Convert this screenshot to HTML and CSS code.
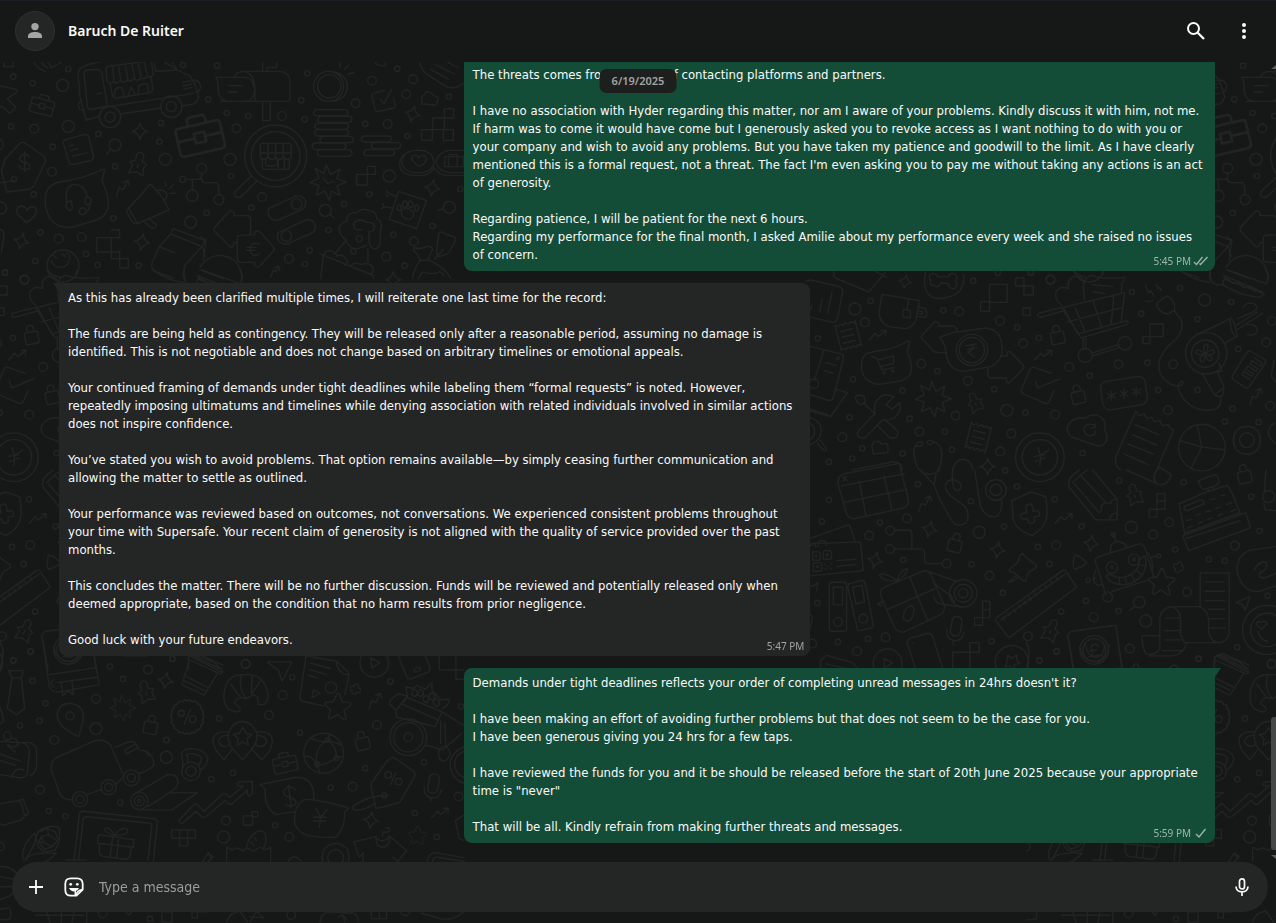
FILE: index.html
```html
<!DOCTYPE html>
<html lang="en">
<head>
<meta charset="utf-8">
<meta name="viewport" content="width=device-width, initial-scale=1">
<title>Baruch De Ruiter</title>
<link rel="stylesheet" href="styles.css">
</head>
<body>
<svg class="wallpaper" width="100%" height="100%" aria-hidden="true">
<defs>
<path id="spark" d="M0-25Q4-4 23 0Q4 4 0 25Q-4 4-23 0Q-4-4 0-25Z"/>
<path id="burst" d="M-5-52L8-22L35-38L27-10L55 0L27 12L36 40L10 27L5 55L-10 27L-35 40L-27 10L-54 2L-27-12L-38-40L-12-25Z"/>
<path id="lock" d="M-20-10Q-20-14-15-14L15-14Q20-14 20-10V17Q20 22 15 22H-15Q-20 22-20 17ZM-10-14V-26Q-9-34 0-34Q9-34 10-26V-14"/>
<path id="arrow" d="M-27 14L-9-6L0 4L22-14M8-15L24-15L22 0"/>
<path id="pin" d="M-10-30Q0-46 12-30L10-12L26-5L18 6L22 30L0 22L-22 30L-16 4L-26-4L-10-12ZM0-2V8"/>
<path id="star" d="M0-40Q4-42 8-34L15-14L38-12Q44-8 38-2L20 12L26 34Q26 42 18 38L0 24L-20 36Q-28 38-26 30L-20 10L-36-4Q-40-12-32-13L-13-14Z"/>
<path id="mic" d="M-15-18Q-15-34 0-34Q15-34 15-18V8Q15 24 0 24Q-15 24-15 8ZM-26 10Q-24 38 0 38Q24 38 26 10M0 38V50"/>
<path id="cross" d="M-6-14Q0-18 6-14L7-7L14-6Q18 0 14 6L7 7L6 14Q0 18-6 14L-7 7L-14 6Q-18 0-14-6L-7-7Z"/>
<path id="case" d="M-30-18H30Q35-18 35-13V20Q35 26 29 26H-29Q-35 26-35 20V-13Q-35-18-30-18ZM-14-18V-26Q-14-31-8-31H8Q14-31 14-26V-18M-35 2H-8M8 2H35M-8-5H8V10H-8Z"/>
<path id="gear" d="M0-40Q6-46 12-38Q22-42 25-32Q36-31 34-21Q43-15 38-7Q45 0 38 7Q43 16 34 21Q35 31 25 32Q21 42 12 38Q6 46 0 40Q-7 46-12 38Q-22 42-25 32Q-36 31-34 21Q-43 15-38 7Q-45 0-38-7Q-43-16-34-21Q-35-31-25-32Q-21-42-12-38Q-6-46 0-40Z"/>
<path id="receipt" d="M-30-40L-22-34L-14-40L-6-34L2-40L10-34L18-40L26-34L32-40V38L24 32L16 38L8 32L0 38L-8 32L-16 38L-24 32L-30 38ZM-18-18H18M-18 0H18M-18 18H18"/>
<pattern id="doodles" width="1026" height="923" patternUnits="userSpaceOnUse">
<g id="tile">
<!-- top left: truck, briefcases, price tag, headset, megaphone -->
<g class="ink">
<circle class="s" cx="205" cy="207"/><circle class="s" cx="98" cy="250"/><circle class="s" cx="40" cy="230"/><circle class="s" cx="33" cy="379"/><circle class="s" cx="158" cy="440"/><circle class="s" cx="295" cy="402"/><circle class="s" cx="483" cy="369"/><circle class="s" cx="478" cy="425"/><circle class="s" cx="345" cy="499"/><circle class="s" cx="101" cy="583"/><circle class="s" cx="340" cy="655"/><circle class="s" cx="121" cy="697"/><circle class="s" cx="106" cy="783"/><circle class="s" cx="258" cy="762"/><circle class="s" cx="293" cy="795"/><circle class="s" cx="416" cy="797"/><circle class="s" cx="15" cy="818"/><circle class="s" cx="549" cy="195"/>
<circle class="l" cx="188" cy="256"/><circle class="m" cx="103" cy="386"/><circle class="l" cx="205" cy="379"/><circle class="m" cx="156" cy="515"/><circle class="l" cx="-8" cy="434"/><circle class="l" cx="496" cy="478"/><circle class="m" cx="176" cy="716"/><circle class="m" cx="245" cy="711"/><circle class="l" cx="572" cy="666"/><circle class="l" cx="2" cy="624"/><circle class="m" cx="73" cy="838"/>
<circle class="l" cx="345" cy="435"/><path d="M332 448L320 462"/>
<path d="M12 180V200H40V180M98 180Q112 208 136 214M118 180Q130 196 142 204M142 180L154 204L184 186"/>
<path d="M-10 255L48 268Q54 271 51 276L22 296L46 320Q48 324 44 327L32 338Q28 340 25 336L5 318L-8 330"/>
<path d="M298 350L258 360Q250 330 240 290L234 220Q236 206 250 200L270 192Q400 160 460 184L468 214L532 210L570 228Q586 250 596 290Q592 308 580 312L546 318M362 342L482 324M490 184L532 210L515 184M252 218Q256 210 264 210L292 208Q304 210 306 222L322 318L272 328Q264 328 262 320ZM292 282L306 278M246 304Q232 306 236 322Q242 334 254 330M272 328L582 280M580 240Q600 240 602 260Q600 276 588 276M548 248L572 242M550 258L574 252M552 268L576 262"/>
<path d="M318 206L320 240Q326 254 340 246Q350 254 360 242Q372 252 382 240Q392 248 402 236Q414 246 422 234Q434 240 442 230Q456 234 460 222L454 186M318 206Q320 198 330 198L440 184M338 200L342 244M356 198L362 240M376 196L384 238M396 192L404 236M414 190L424 232M434 188L442 228M330 252L338 288Q342 296 352 294L448 278Q456 276 458 268L454 232M342 292L346 268Q356 260 366 264L372 286M384 284L394 262L406 282M414 278L418 256Q430 248 442 252L446 276"/>
<circle cx="330" cy="351" r="32"/><circle cx="330" cy="351" r="15"/><circle cx="514" cy="320" r="32"/><circle cx="514" cy="320" r="15"/>
<use href="#case" transform="translate(127 316) rotate(14)"/><use href="#case" transform="translate(599 408) rotate(-13) scale(1.95)"/>
<use href="#spark" x="420" y="394"/><use href="#spark" transform="translate(64 724) rotate(14)"/><use href="#spark" transform="translate(426 726) rotate(8)"/>
<use href="#pin" transform="translate(414 494) rotate(12)"/><use href="#arrow" transform="translate(368 565) rotate(-24)"/>
<path d="M200 418L252 404Q264 402 267 412L280 468Q282 478 272 482L220 493Q210 495 207 485L190 430Q190 420 200 418ZM208 438L220 435M212 452L234 446M218 469L262 458"/>
<path d="M60 430L20 472Q12 480 10 496L4 510L20 576L86 568Q96 566 104 552L136 486Q138 476 130 468L76 430Q66 424 60 430ZM-10 550L42 542"/><circle class="s" cx="42" cy="538"/>
<path d="M88 470Q82 462 72 464Q58 468 59 478Q62 486 76 488Q90 492 90 500Q86 510 72 508Q60 506 57 496M74 454V514"/>
<path d="M314 510L306 544Q330 590 324 625Q314 654 284 662L214 682Q174 686 150 656Q130 616 138 580Q148 552 178 546Q250 536 304 510Q314 506 314 510ZM200 608Q192 566 218 554Q250 548 262 590M201 608Q190 624 212 632Q222 624 212 602ZM256 592Q272 588 274 606Q264 618 256 612ZM270 614Q268 632 258 634"/><circle cx="248" cy="634" r="10"/>
<path d="M80 668L52 642Q46 622 62 618Q76 618 80 632Q90 616 106 622Q116 638 96 656Z"/>
<path d="M450 552Q476 570 508 630L410 672Q402 672 396 664L380 636Q380 628 386 624Q420 590 450 552ZM386 624L412 670M430 662L454 684Q466 688 470 676L446 654M472 572Q490 566 500 580Q502 594 492 602M494 546L498 558M508 566L520 554M512 580H528"/>
<circle cx="605" cy="505" r="15"/><circle cx="548" cy="538" r="9"/><circle cx="577" cy="587" r="17"/><circle cx="657" cy="599" r="15"/><path d="M557 538H598Q606 536 605 520M605 536Q606 548 616 548H650Q657 550 657 584M577 538V570"/>
<path d="M334 690H359V713H334V756H290V713H334M334 756V776H359V804H385V776H359V756H334"/>
<circle cx="189" cy="798" r="48"/><path d="M154 782Q160 802 182 802Q208 800 210 770Q206 754 196 764M160 766L170 774M186 762L196 770M-6 690Q12 684 12 710L4 756"/>
<path d="M520 686L616 722L606 740L512 702ZM512 702L478 740L524 758M478 740L456 790Q452 806 464 814L520 834M606 740L556 794Q548 812 556 840M606 740L616 770"/>
</g>
<!-- mailbox, magnifier, coins, tags, poodle -->
<g class="ink" transform="translate(600 180)">
<circle class="s" cx="51" cy="17"/><circle class="s" cx="25" cy="118"/><circle class="s" cx="80" cy="159"/><circle class="s" cx="145" cy="168"/><circle class="s" cx="304" cy="121"/><circle class="s" cx="314" cy="178"/><circle class="s" cx="322" cy="40"/><circle class="s" cx="592" cy="26"/><circle class="s" cx="747" cy="110"/><circle class="s" cx="496" cy="191"/><circle class="s" cx="622" cy="228"/><circle class="s" cx="93" cy="348"/><circle class="s" cx="20" cy="459"/><circle class="s" cx="154" cy="443"/><circle class="s" cx="432" cy="432"/><circle class="s" cx="508" cy="403"/><circle class="s" cx="386" cy="510"/><circle class="s" cx="580" cy="524"/><circle class="s" cx="698" cy="498"/><circle class="s" cx="781" cy="387"/><circle class="s" cx="329" cy="571"/><circle class="s" cx="315" cy="612"/><circle class="s" cx="460" cy="574"/><circle class="s" cx="614" cy="617"/>
<circle class="m" cx="246" cy="168"/><circle class="m" cx="109" cy="205"/><circle class="l" cx="90" cy="298"/><circle class="m" cx="467" cy="130"/><circle class="m" cx="516" cy="62"/><circle class="m" cx="640" cy="58"/><circle class="m" cx="619" cy="103"/><circle class="m" cx="563" cy="192"/><circle class="l" cx="568" cy="348"/><circle class="m" cx="186" cy="411"/><circle class="m" cx="267" cy="596"/><circle class="m" cx="559" cy="590"/><circle class="m" cx="642" cy="544"/>
<path d="M48 52H140Q162 58 164 90Q162 122 136 124H80Q54 118 54 84Q56 70 48 52ZM62 124H260Q270 124 270 114V60Q266 36 240 34H134Q110 34 104 50M134 34Q164 42 165 90V124M84 77H128M84 96H110M188 34V0M230 0V22H202V34M188 124V182H211V124"/>
<circle cx="386" cy="79" r="45"/><circle cx="388" cy="79" r="35"/><path d="M398 36Q444 44 442 84Q438 118 400 124M418 5L422 22M434 28L446 16M444 42L462 38"/>
<circle cx="227" cy="288" r="93"/><circle cx="227" cy="288" r="73"/><path d="M154 348L108 392Q98 402 108 410Q118 416 126 408L172 362M188 250H268Q274 252 274 258V290Q272 298 262 298Q252 298 250 290Q248 298 238 298Q228 298 226 290Q226 298 216 298Q206 298 204 290Q200 298 192 298Q182 298 181 290V258Q182 250 188 250ZM181 279H274M204 250V290M227 250V290M250 250V290M187 298V322Q188 328 194 328H262Q268 328 268 320V298M197 298V310Q198 318 204 318H226Q232 316 232 308V296M235 328V298M253 328V298"/>
<path d="M350 149H434Q444 149 444 158T434 167H350Q340 167 341 158T350 149ZM362 169H448Q456 171 456 178T448 188H362Q354 186 354 179T362 169ZM354 190H436Q446 192 446 199T436 208H354Q344 206 344 199T354 190ZM354 209H436Q446 211 446 219T436 228H354Q344 227 344 218T354 209ZM368 229H450Q460 230 460 239T450 248H368Q360 246 360 239T368 229ZM346 249H430Q438 251 438 259T430 268H346Q336 267 337 258T346 249ZM362 269H446Q456 271 456 279T446 289H362Q352 288 352 279T362 269Z"/>
<path d="M492 228H566Q574 230 574 237T566 246H492Q484 244 484 237T492 228ZM522 248H594Q602 250 602 257T594 266H522Q514 264 514 257T522 248ZM500 269H576Q584 270 584 278T576 287H500Q492 286 492 278T500 269Z"/>
<path d="M552 91L520 100Q514 103 516 110L526 150Q528 156 536 154L580 144Q588 142 586 134L580 112M540 117L552 130L576 88M520 0Q530 20 556 18V5"/>
<path d="M664 134L667 110Q668 106 674 104L680 95L696 100L698 106L710 110Q715 112 714 118L710 132Q708 136 702 135L670 132ZM660 5Q660 24 682 44L740 80Q764 90 790 70M692 28L746 58M702 12L764 42M740 5L776 24"/>
<use href="#spark" transform="translate(638 162) rotate(14)"/><use href="#spark" transform="translate(697 384) rotate(10)"/><use href="#spark" x="580" y="660"/><use href="#burst" x="384" y="366"/><path d="M370 354L382 370L402 364M528 364"/>
<path d="M733 146H761V174H733ZM698 174H733V209H698ZM665 209H697V241H665ZM730 209H760V241H730ZM502 319H526V343H502ZM470 343H502V375H470Z"/>
<path d="M642 271H664Q700 276 702 308Q698 336 664 338H640Q608 332 606 306Q608 276 642 271ZM610 284Q590 310 606 334Q620 346 640 346H668Q690 346 700 326M656 320L636 300Q632 286 646 286Q654 286 656 294Q664 282 676 288Q684 302 668 314ZM800 271H750Q712 276 708 308Q714 334 750 338H800M702 322Q716 346 740 346H800M734 290H790V320H734ZM746 284H772V320M746 290V320"/>
<path d="M206 446L288 408Q310 406 317 424Q318 444 304 450L236 480Q212 484 204 462ZM234 518L318 480Q342 476 346 500Q346 516 330 522L262 552Q238 554 232 532Z"/><circle cx="290" cy="432" r="16"/><circle cx="259" cy="528" r="16"/>
<circle cx="376" cy="451" r="18"/><path d="M389 464L404 474"/><circle cx="748" cy="442" r="18"/><path d="M730 446L712 452M596 394L680 422L650 506L568 478ZM559 392L566 400L590 410M558 404L564 410M548 430L552 440L574 444M544 446L552 442M604 460Q608 478 626 478Q646 474 640 456Q624 438 606 450Z"/>
<ellipse cx="598" cy="443" rx="6" ry="9"/><ellipse cx="615" cy="433" rx="7" ry="10"/><ellipse cx="632" cy="433" rx="7" ry="10"/><ellipse cx="650" cy="444" rx="6" ry="9"/>
<path d="M152 525V476Q150 468 142 467H102V458Q98 450 88 454L44 502Q40 508 44 514L90 560Q98 564 101 554V548H112M164 524V516Q172 510 180 516L220 560Q226 568 220 574L178 620Q168 624 164 616V607H120Q112 606 112 598V534Q112 526 120 526ZM178 552Q160 544 152 560Q148 580 160 586Q170 588 178 582M140 562H168M140 571H166"/>
<path d="M439 540Q414 524 418 504Q422 486 440 484Q440 456 470 458Q486 442 508 452Q530 454 530 476Q546 480 544 502L540 516Q546 556 530 566Q512 570 508 548L506 516Q524 514 524 500Q520 484 502 488Q486 476 472 482Q456 488 462 500Q466 512 486 508M439 540L404 582M504 566L504 605M440 546Q450 566 474 566L500 556"/><circle cx="478" cy="536" r="9"/>
<path d="M360 582L520 646V655M370 588L362 656M372 586Q372 572 392 572Q410 576 410 588Q430 580 440 600Q448 612 434 616M454 616Q466 604 482 614Q500 606 514 616Q528 632 510 644M212 652L220 630L228 636L234 620M222 624L236 618L240 632"/>
<path d="M0 530L18 540L10 600M0 622Q20 588 60 586Q120 590 128 656M0 630L70 656M722 516L764 532Q768 536 766 542L746 580L718 590Q710 588 710 580L716 520ZM730 568L704 598M642 562Q660 570 680 560Q698 556 698 570Q684 590 686 600L660 602Q660 588 642 574ZM660 602Q640 630 638 656M686 600Q740 626 752 656M656 656Q664 628 680 640H710Q724 628 732 650"/>
</g>
<!-- right, upper: cart, speech bubbles, hair dryer, tools -->
<g class="ink" transform="translate(2418 810)">
<circle class="s" cx="194" cy="93"/><circle class="s" cx="36" cy="205"/><circle class="s" cx="412" cy="121"/><circle class="s" cx="502" cy="32"/><circle class="s" cx="576" cy="8"/><circle class="s" cx="675" cy="8"/><circle class="s" cx="634" cy="172"/><circle class="s" cx="699" cy="204"/><circle class="s" cx="394" cy="303"/><circle class="s" cx="141" cy="328"/><circle class="s" cx="290" cy="362"/><circle class="s" cx="565" cy="358"/><circle class="s" cx="131" cy="442"/><circle class="s" cx="311" cy="446"/><circle class="s" cx="417" cy="485"/><circle class="s" cx="659" cy="428"/><circle class="s" cx="169" cy="535"/><circle class="s" cx="290" cy="551"/><circle class="s" cx="139" cy="566"/><circle class="s" cx="69" cy="576"/><circle class="s" cx="438" cy="540"/><circle class="s" cx="830" cy="550"/><circle class="s" cx="852" cy="317"/><circle class="s" cx="978" cy="66"/><circle class="s" cx="1006" cy="131"/><circle class="s" cx="1122" cy="54"/><circle class="s" cx="1175" cy="147"/><circle class="s" cx="1276" cy="96"/><circle class="s" cx="1025" cy="278"/><circle class="s" cx="1057" cy="360"/><circle class="s" cx="1175" cy="360"/><circle class="s" cx="1297" cy="237"/><circle class="s" cx="1280" cy="416"/><circle class="s" cx="1257" cy="455"/><circle class="s" cx="1358" cy="457"/><circle class="s" cx="598" cy="602"/>
<circle class="l" cx="147" cy="117"/><circle class="m" cx="177" cy="157"/><circle class="m" cx="460" cy="124"/><circle class="m" cx="734" cy="30"/><circle class="m" cx="582" cy="152"/><circle class="m" cx="652" cy="220"/><circle class="m" cx="346" cy="281"/><circle class="m" cx="486" cy="332"/><circle class="m" cx="790" cy="291"/><circle class="l" cx="603" cy="421"/><circle class="m" cx="449" cy="437"/><circle class="m" cx="748" cy="434"/><circle class="m" cx="341" cy="485"/><circle class="m" cx="616" cy="491"/><circle class="m" cx="109" cy="502"/><circle class="m" cx="583" cy="545"/><circle class="m" cx="938" cy="283"/><circle class="m" cx="1102" cy="283"/><circle class="l" cx="1196" cy="90"/><circle class="m" cx="1398" cy="153"/><circle class="m" cx="1381" cy="217"/><circle class="m" cx="1086" cy="421"/><circle class="m" cx="1393" cy="408"/>
<use href="#spark" transform="translate(298 35) rotate(12) scale(.85)"/><use href="#spark" x="545" y="590"/><use href="#burst" x="382" y="386"/><use href="#lock" transform="translate(755 200) rotate(-12)"/><use href="#lock" transform="translate(817 379) rotate(-12)"/><use href="#arrow" x="217" y="196"/><use href="#arrow" x="714" y="256"/><use href="#arrow" transform="translate(1350 380) rotate(-28)"/><use href="#pin" transform="translate(508 400) rotate(-24) scale(.85)"/>
<use href="#receipt" transform="translate(126 198) rotate(-14)"/><use href="#receipt" transform="translate(516 503) rotate(14)"/><use href="#gear" x="1323" y="511"/><circle cx="1323" cy="511" r="22"/>
<path d="M0 34L14 30L100 50Q112 54 110 68L94 148Q90 158 80 157L6 140M48 86L42 124M78 68L65 130M18 106L14 120M83 0L84 22L188 66L238 8M200 0L242 22"/>
<path d="M228 73L340 92L330 150Q318 176 296 176L250 170Q224 162 219 132ZM308 88L304 118M292 118L314 122L312 144L290 140ZM338 110L358 116Q366 128 360 142L334 140M336 122L350 126L348 132L334 130"/>
<path d="M360 0Q346 60 376 80Q396 92 440 78Q478 60 473 14M384 46Q368 44 374 32Q364 14 380 10Q396 14 394 20H428Q432 6 446 12Q458 20 450 32Q458 50 444 56Q430 58 428 42L404 38Q400 58 384 46Z"/>
<path d="M551 43H604V97H551ZM524 95H551V124H524ZM629 24H654V48H629ZM654 48H682V75H654ZM651 114H673V136H651ZM1032 162H1072V200H1032ZM1011 200H1032V221H1011Z"/>
<path d="M770 108Q744 90 750 66Q764 46 788 56Q782 30 802 20Q828 14 836 40M804 0Q810 14 840 22M888 14L892 0M836 92L832 50Q832 26 856 16Q900 30 956 22Q960 26 948 40L946 70M860 44L920 50M862 66L896 70"/>
<path d="M698 130L766 112M704 142L776 122M698 130Q690 142 704 142M766 112L826 204L962 164Q972 158 962 152L816 192L772 112L956 68L946 154M784 156L946 114M808 114L838 186M862 94L888 174M924 76L916 162M832 204V240M840 204V238M856 250L938 224M860 258L942 232"/><circle cx="838" cy="256" r="21"/><circle cx="957" cy="220" r="20"/>
<path d="M420 248H398L396 246Q388 250 380 240L348 206Q344 200 350 194L388 154L398 158V168H436Q452 168 454 184M400 202L440 188L540 174Q584 180 588 224Q594 270 556 290L472 304Q430 300 422 260Q420 220 400 202ZM584 258H604V246L612 244L652 286Q656 292 650 298L612 338Q604 340 602 334V324H554Q546 322 546 314V294M480 228L512 222M484 238L514 232M484 226Q506 222 500 238Q490 248 486 246L506 262"/><circle cx="498" cy="240" r="47"/><circle cx="498" cy="240" r="38"/>
<path d="M312 214L304 246Q324 290 312 314Q300 330 276 334L220 343Q180 340 168 306Q162 266 180 252Q200 244 236 240Q280 230 304 214ZM196 260L212 264L228 300L264 293M216 270L262 258L264 280L224 290"/><circle cx="234" cy="309" r="3"/><circle cx="260" cy="303" r="3"/>
<path d="M736 310L684 292Q676 290 672 298L646 360Q644 368 652 372L718 400Q726 402 730 396L744 362M688 334L696 354L762 326"/>
<path d="M900 334L996 320Q1014 320 1018 334L1024 378Q1026 398 1008 404L916 420Q896 420 891 404L884 356Q884 338 900 334ZM916 364V390M904 370L928 384M904 384L928 370M954 358V384M943 364L966 378M943 378L966 364M991 352V378M980 358L1004 372M980 372L1004 358"/>
<path d="M1018 46L1028 68L1034 62L1044 78M1052 42L1056 56L1062 52L1066 62M1018 92L1028 96L1040 92M1052 100L1082 78Q1110 90 1106 122L1086 132Q1056 128 1052 100ZM1106 122L1112 132Q1144 160 1114 204Q1076 234 1060 270Q1050 330 1110 348Q1140 346 1128 334Q1112 336 1120 364Q1150 428 1222 420Q1250 412 1244 384"/>
<path d="M1176 192Q1220 174 1272 146Q1284 140 1294 198L1256 220M1272 148Q1276 200 1294 200M1292 166L1354 126M1296 178L1370 130M1312 112Q1322 94 1346 102Q1364 116 1336 128L1296 146M1324 164Q1354 162 1354 180Q1352 200 1324 194M1188 310L1226 374Q1240 386 1252 374L1254 348L1234 306L1248 304L1240 280M1226 374L1254 354"/><circle cx="1201" cy="250" r="62"/><circle cx="1198" cy="251" r="41"/><path d="M1198 251Q1188 224 1202 222Q1212 232 1198 251Q1222 232 1226 246Q1222 260 1198 251Q1228 264 1214 272Q1204 276 1198 251Q1196 284 1184 274Q1178 262 1198 251Q1168 258 1170 246Q1172 232 1198 251Z"/>
<path d="M1324 246Q1330 240 1338 246L1376 268Q1382 274 1378 280L1330 350Q1324 356 1316 352L1284 330Q1276 324 1280 316ZM1346 264L1370 280L1364 288L1338 272L1332 282L1356 296L1350 304L1326 288L1320 298L1344 312L1338 320L1314 304L1308 314L1332 328M1404 270L1396 320L1410 336"/>
<path d="M1120 0Q1160 30 1212 38M1212 0Q1204 50 1252 44M1252 16L1370 66Q1378 76 1358 82Q1300 76 1254 46Q1248 36 1256 28L1376 72M1266 0L1382 42Q1390 14 1380 0M1254 24Q1270 26 1280 40Q1300 34 1312 52Q1340 46 1350 64"/>
<path d="M0 226L104 252Q116 256 112 268L82 384Q78 394 68 391L0 370M54 240L26 330M60 278L90 286M56 302L82 310M92 262L100 268M100 260L92 270M90 358L124 368L74 440L0 420M74 440L60 432L0 414"/><circle cx="24" cy="341" r="14"/>
<path d="M148 380Q160 372 174 380L178 398L164 404Q150 400 148 380ZM174 400L208 432M264 380Q232 366 212 392Q202 410 208 430L158 482Q150 492 160 502Q170 508 180 500L230 450Q250 452 264 444Q288 428 282 398L258 418L240 404ZM216 468L248 500Q262 510 272 500Q280 490 272 480L240 452"/>
<path d="M0 440Q48 448 46 486Q40 520 0 528M0 456Q28 460 26 490Q20 510 0 514M34 520L54 542Q66 542 58 530L42 510M198 526L204 516L222 514L226 522L240 520L246 526V548L202 552ZM330 522Q340 512 352 520Q346 532 330 528ZM364 514Q374 508 384 516Q376 528 364 520ZM332 526Q320 534 324 550Q330 590 340 600M384 516Q402 518 408 550Q406 590 396 600"/>
<circle cx="702" cy="562" r="73"/><circle cx="702" cy="562" r="53"/><path d="M696 532L704 556L728 540M704 556L702 586M684 560L716 554M688 574L718 564"/>
<path d="M838 444Q868 424 892 448Q902 468 896 482Q910 500 898 518Q886 532 870 526L800 502Q778 490 786 466Q802 440 838 444ZM866 466Q846 456 834 474Q834 494 852 498Q868 496 870 482M868 462V472L856 474"/>
<path d="M990 424L1000 438L1014 432L1024 446L1038 442L1046 456L1062 452L1070 468L1086 464L1094 476L1104 478L1054 596M990 424L930 560Q924 590 944 600M988 464L1058 494M980 494L1054 526M966 522L1042 552M954 552L1026 584"/>
<circle cx="1188" cy="533" r="70"/><path d="M1188 531L1174 466M1188 531L1122 512M1188 531L1256 540M1188 531L1156 594M1404 460Q1382 474 1390 500L1406 520M140 600L260 576Q286 574 290 600M440 600Q450 566 474 568Q498 572 500 600"/>
</g>
<!-- right, lower: calendar, pencil, register, robot, ruler, binders -->
<g class="ink" transform="translate(2418 1410)">
<circle class="s" cx="69" cy="90"/><circle class="s" cx="48" cy="155"/><circle class="s" cx="336" cy="43"/><circle class="s" cx="222" cy="158"/><circle class="s" cx="495" cy="94"/><circle class="s" cx="633" cy="50"/><circle class="s" cx="747" cy="88"/><circle class="s" cx="594" cy="170"/><circle class="s" cx="827" cy="169"/><circle class="s" cx="940" cy="32"/><circle class="s" cx="1133" cy="37"/><circle class="s" cx="1336" cy="80"/><circle class="s" cx="1361" cy="183"/><circle class="s" cx="292" cy="270"/><circle class="s" cx="497" cy="283"/><circle class="s" cx="696" cy="231"/><circle class="s" cx="731" cy="282"/><circle class="s" cx="591" cy="369"/><circle class="s" cx="34" cy="399"/><circle class="s" cx="96" cy="516"/><circle class="s" cx="186" cy="507"/><circle class="s" cx="557" cy="514"/><circle class="s" cx="766" cy="425"/><circle class="s" cx="840" cy="393"/><circle class="s" cx="938" cy="423"/><circle class="s" cx="752" cy="544"/><circle class="s" cx="700" cy="572"/><circle class="s" cx="1108" cy="239"/><circle class="s" cx="1209" cy="268"/><circle class="s" cx="1257" cy="273"/><circle class="s" cx="1385" cy="377"/><circle class="s" cx="1294" cy="532"/><circle class="s" cx="1178" cy="566"/>
<circle class="m" cx="303" cy="145"/><circle class="m" cx="190" cy="197"/><circle class="l" cx="520" cy="187"/><circle class="m" cx="751" cy="225"/><circle class="m" cx="551" cy="317"/><circle class="l" cx="976" cy="172"/><circle class="m" cx="1090" cy="157"/><circle class="m" cx="1042" cy="194"/><circle class="m" cx="1287" cy="227"/><circle class="m" cx="1144" cy="366"/><circle class="l" cx="1020" cy="453"/><circle class="m" cx="863" cy="442"/><circle class="m" cx="666" cy="499"/><circle class="m" cx="239" cy="502"/><circle class="m" cx="153" cy="544"/><circle class="m" cx="19" cy="521"/><circle class="m" cx="972" cy="536"/><circle class="m" cx="1397" cy="582"/>
<use href="#spark" transform="translate(371 178) rotate(14)"/><use href="#spark" transform="translate(208 271) rotate(14)"/><use href="#spark" transform="translate(575 240) rotate(8)"/><use href="#spark" transform="translate(856 220) rotate(8)"/><use href="#lock" transform="translate(447 224) rotate(14)"/><use href="#lock" transform="translate(1316 18) rotate(-12)"/><use href="#arrow" transform="translate(357 102) rotate(-24)"/><use href="#arrow" x="775" y="146"/><use href="#pin" transform="translate(986 76) rotate(-16) scale(.9)"/><use href="#pin" transform="translate(734 484) rotate(20) scale(.95)"/><use href="#star" x="1066" y="336"/><use href="#cross" transform="translate(1118 292) rotate(20)"/><use href="#mic" transform="translate(450 474) rotate(10)"/>
<path d="M112 12L280-20L308 92Q308 108 294 114L146 146Q128 146 122 132L96 40Q96 18 112 12ZM106 48L296 12M110 98L304 58M160 34L180 136M234 18L258 118M110 20L124 32M122 18L112 34"/>
<path d="M344 0L384 44Q404 100 438 152Q458 176 480 158Q494 136 478 110L432 76Q410 52 424 34Q446 22 464 42Q470 62 450 62Q436 50 440 0M360 10Q380 18 402 0M390 14L384 44M506 0L524 110Q542 146 570 140Q592 128 586 86"/><circle cx="570" cy="60" r="31"/><circle cx="570" cy="60" r="17"/>
<path d="M618 92L676 66L718 80Q722 90 724 130Q720 176 678 196Q634 182 622 150ZM660 110L664 104L676 102L680 110L682 124L696 122Q702 128 700 138L684 142L686 154Q680 162 670 160L664 146L650 148Q640 140 644 132L662 128Z"/>
<path d="M790 52L862 140Q866 150 876 150H934V88L860 0M790 52Q782 30 802 14L820 0M800 38L828 12L844 0M806 42L880 128Q890 122 886 108Q898 92 916 102Q914 88 930 88M826 18L900 98M912 146Q914 130 934 128M960 0L1060 44Q1088 46 1096 14L1062-8Q1034 14 1050 38"/>
<path d="M1053 71H1077V94H1053ZM1053 94H1077V118H1053ZM1030 118H1053V141H1030ZM530 394H552V419H530ZM530 419H552V443H530ZM506 443H530V466H506ZM440 600V547H492M492 518H520V547H492ZM492 547V600"/>
<path d="M1120 102L1206 64L1264 46Q1276 60 1302 128L1136 190ZM1130 198L1320 128L1334 174L1148 242ZM1140 206L1302 152M1178 32L1226 14Q1236 14 1240 36L1232 46L1196 58Q1184 58 1178 32ZM1206 58L1212 66M1222 52L1226 60M1134 110L1186 90Q1194 92 1194 102L1146 122Q1134 122 1134 110M1142 152L1156 148M1170 136L1184 132M1200 126L1214 122M1230 116L1242 110M1262 104L1276 98M1214 90L1228 86M1244 78L1256 74M1146 174L1160 168M1176 160L1190 156M1206 148L1218 144M1236 138L1250 132M1276 124L1290 118M1380 0L1376 66M1374 100L1378 120L1410 122"/><circle cx="1388" cy="80" r="18"/>
<path d="M12 205L130 164L148 216M12 222L164 216L172 302L12 318M20 246H38Q43 248 43 254V266Q42 271 36 271H20V246ZM54 242H70Q77 244 77 252V262Q76 268 68 268H52V248ZM24 278H42Q48 280 48 288V298Q46 304 40 304H22V284ZM14 228L24 218L30 230M36 230L38 214L56 212L62 226M94 272L150 268M94 289L150 284M56 282L58 284M74 280L76 282M64 288L68 290M58 296L60 298M74 294L76 296"/><circle cx="31" cy="258" r="3"/><circle cx="64" cy="255" r="3"/><circle cx="35" cy="290" r="3"/>
<circle cx="253" cy="182" r="13"/><circle cx="252" cy="237" r="13"/><circle cx="422" cy="281" r="13"/><path d="M266 181H308Q318 182 318 192V236M266 237H346Q355 238 356 248V272Q358 281 366 281H408"/>
<path d="M76 337H114Q122 338 122 346V478Q122 484 114 484H78Q70 484 70 478V344ZM82 352H110V404H82ZM128 342L164 332Q174 330 178 340L202 464Q202 472 194 474L164 482Q156 482 154 476L126 352ZM140 352L168 346L176 396L150 402Z"/><circle cx="96" cy="456" r="13"/><circle cx="172" cy="446" r="13"/>
<path d="M234 352L350 304Q370 300 376 316L416 408Q418 424 404 434L300 484Q278 492 266 474L224 376Q220 360 234 352ZM274 332Q232 336 220 316Q230 302 274 332Q280 302 304 296Q306 312 274 332ZM312 322L366 454M244 418L388 356M292 446Q292 412 316 406Q332 412 320 440Q308 464 292 446ZM360 302L452 334M404 402L470 412M384 340L432 376M384 380Q388 400 406 402M432 372L446 396M214 402L228 394L226 408Z"/><circle cx="472" cy="370" r="41"/><circle cx="472" cy="370" r="27"/><circle cx="472" cy="370" r="14"/>
<path d="M650 250Q662 268 690 284Q696 290 684 298Q664 304 662 324Q658 340 648 330Q630 308 612 304Q606 298 620 290Q640 280 640 260ZM630 318L608 336L620 334L638 322M570 444L770 302Q778 298 782 306L812 352L614 500Q608 504 604 498L568 450M584 450L778 312M590 442L596 450M606 430L612 438M622 418L628 426M638 406L644 414M654 394L660 402M670 382L676 390M686 370L692 378M702 358L708 366M718 346L724 354M734 334L740 342M750 322L756 330M806 256Q820 254 842 278Q836 288 806 298Q798 288 806 256Z"/>
<path d="M880 260L1000 222Q1010 220 1018 236L1044 322M900 374L868 274Q868 264 880 260M918 364L1030 330M914 246Q910 220 934 214Q956 218 962 230M922 194L930 214M860 328L870 324M870 300Q858 324 866 338Q876 352 888 342M1020 246Q1040 254 1040 300M1036 262L1052 258M900 318Q920 354 976 340Q1030 316 1018 258L1000 268Q1002 306 960 320Q932 328 912 312ZM940 322L942 342M958 320L962 344M976 312L986 332M990 300L1008 314M1000 284L1020 288"/><circle cx="918" cy="293" r="17"/><circle cx="984" cy="269" r="17"/><circle cx="918" cy="293" r="4"/><circle cx="984" cy="269" r="4"/><circle cx="922" cy="194" r="6"/><circle cx="846" cy="332" r="6"/><circle cx="1058" cy="258" r="6"/><circle cx="905" cy="381" r="15"/>
<circle cx="1000" cy="397" r="17"/><path d="M987 410L970 422M1183 410V309H1270V490Q1262 520 1236 518H1140M1100 410H1180Q1206 420 1208 450V480Q1214 520 1240 518M1124 450V490Q1130 518 1144 520M1094 410Q1060 420 1062 450V536Q1050 558 1020 552Q1008 530 1008 497H1060M1094 410Q1124 416 1124 450M1030 558H1100Q1138 550 1140 520M1198 336H1256M1198 364H1256M1198 392H1256M1208 418H1256M1212 446H1256M1212 474H1258M1078 444H1120M1078 482H1122M1078 510H1124M1070 542H1132"/>
<path d="M1410 230L1336 240Q1290 254 1294 306Q1310 370 1360 364L1410 348M1344 300Q1362 270 1382 278Q1386 300 1366 306Q1350 324 1376 324L1410 310M1332 380L1290 398L1310 404L1318 422Z"/><circle cx="1384" cy="480" r="74"/><circle cx="1384" cy="480" r="50"/><path d="M1366 478L1352 464Q1352 450 1366 458Q1376 448 1384 462ZM1356 484Q1364 512 1386 514"/>
<path d="M804 600L786 500Q786 488 798 484L930 466L948 596"/><circle cx="865" cy="540" r="43"/><circle cx="865" cy="540" r="34"/><path d="M878 530Q874 520 862 524Q852 530 860 544Q864 556 850 560L880 556M850 543L872 540"/>
<circle cx="245" cy="580" r="43"/><path d="M234 566L260 578L236 594ZM330 600L304 520Q304 508 316 504L364 490Q376 490 380 500L412 600M322 518V520M44 600V572L62 556L140 578L158 600M60 582L140 600M0 340L20 350L36 338L32 362M0 424L20 440L14 474"/><circle cx="618" cy="577" r="50"/><path d="M606 556L618 566L632 554L632 570L642 580L626 584L624 598L610 588L598 590L604 574ZM1226 600V560L1250 550L1330 586M1240 558L1320 596"/>
</g>
<!-- bottom left: van, balloons, globe, bicycle, chart, gift -->
<g class="ink" transform="translate(0 1920)">
<circle class="s" cx="40" cy="62"/><circle class="s" cx="92" cy="35"/><circle class="s" cx="98" cy="123"/><circle class="s" cx="137" cy="190"/><circle class="s" cx="60" cy="257"/><circle class="s" cx="118" cy="243"/><circle class="s" cx="330" cy="80"/><circle class="s" cx="369" cy="117"/><circle class="s" cx="517" cy="57"/><circle class="s" cx="657" cy="236"/><circle class="s" cx="499" cy="300"/><circle class="s" cx="634" cy="418"/><circle class="s" cx="699" cy="399"/><circle class="s" cx="361" cy="488"/><circle class="s" cx="146" cy="513"/><circle class="s" cx="196" cy="529"/><circle class="s" cx="877" cy="112"/><circle class="s" cx="900" cy="278"/><circle class="s" cx="992" cy="443"/><circle class="s" cx="1096" cy="385"/><circle class="s" cx="1171" cy="124"/><circle class="s" cx="1272" cy="367"/><circle class="s" cx="825" cy="556"/><circle class="s" cx="1245" cy="520"/><circle class="s" cx="1310" cy="591"/><circle class="s" cx="1383" cy="200"/><circle class="s" cx="450" cy="837"/>
<circle class="m" cx="444" cy="89"/><circle class="m" cx="737" cy="72"/><circle class="m" cx="288" cy="177"/><circle class="l" cx="288" cy="266"/><circle class="m" cx="163" cy="300"/><circle class="l" cx="499" cy="352"/><circle class="m" cx="120" cy="449"/><circle class="m" cx="807" cy="226"/><circle class="m" cx="848" cy="166"/><circle class="m" cx="678" cy="542"/><circle class="l" cx="671" cy="591"/><circle class="m" cx="868" cy="591"/><circle class="m" cx="1058" cy="440"/><circle class="m" cx="1131" cy="255"/><circle class="m" cx="1376" cy="470"/><circle class="m" cx="0" cy="620"/><circle class="m" cx="308" cy="820"/><circle class="m" cx="874" cy="826"/><circle class="m" cx="1216" cy="814"/>
<use href="#spark" transform="translate(497 122) rotate(10)"/><use href="#spark" transform="translate(1113 541) rotate(8)"/><use href="#burst" transform="translate(368 204) scale(.72)"/><use href="#pin" transform="translate(438 158) rotate(-18) scale(.95)"/><use href="#lock" transform="translate(452 260) rotate(10)"/><use href="#lock" transform="translate(1088 308) rotate(-14)"/><use href="#arrow" transform="translate(1126 184) rotate(-24)"/><use href="#arrow" x="1322" y="520"/><use href="#star" transform="translate(1012 200)"/><use href="#cross" transform="translate(1066 148) rotate(20)"/><use href="#mic" transform="translate(1300 436) rotate(10)"/><use href="#case" transform="translate(855 370) rotate(-12) scale(1.02)"/><use href="#gear" transform="translate(562 231) scale(1.2)"/><use href="#gear" transform="translate(1007 653)"/><circle cx="1007" cy="653" r="24"/><use href="#star" transform="translate(1252 586) scale(.7)"/>
<circle cx="544" cy="220" r="9"/><circle cx="578" cy="238" r="10"/><path d="M572 208L552 254M130 10L148 140Q154 158 180 156L298 134L278 20M148 104L286 84M160 120Q146 132 162 142M172 128L290 112M184 128L188 168L204 152L220 164L216 122M160 20Q170 66 216 66Q246 56 250 14M178 12Q184 52 214 52Q234 46 236 14"/>
<path d="M26 92H70L64 114H36ZM36 114L22 206L50 224L74 206L64 114M-4 0Q20 30 0 86M0 200L12 244L0 252M236 290Q170 260 172 222Q178 190 210 190Q250 196 250 230Q250 250 236 290Z"/><circle cx="210" cy="228" r="12"/>
<circle cx="22" cy="288" r="12"/><path d="M18 304Q46 284 54 310Q48 330 24 314M22 316L46 336M0 304L66 308Q90 314 88 340L82 400Q78 414 62 414L0 404M54 308H90Q112 316 110 340V380Q106 400 90 408M0 342L62 364M0 362L46 376M36 412Q42 380 70 390"/>
<path d="M218 480Q190 480 180 464L154 390Q150 360 176 350L280 304Q314 294 332 316L368 400M262 464L304 448M344 436L368 414M344 322L386 306Q410 300 416 330L440 334Q460 346 462 374Q450 392 418 400M376 330L408 312M380 342L410 326M376 330Q374 340 382 342M440 336Q438 346 452 346"/><circle cx="240" cy="478" r="23"/><circle cx="240" cy="478" r="12"/><circle cx="326" cy="442" r="23"/><circle cx="326" cy="442" r="12"/><circle cx="394" cy="414" r="24"/><circle cx="394" cy="414" r="12"/>
<circle cx="418" cy="483" r="26"/><circle cx="418" cy="483" r="15"/><circle cx="418" cy="483" r="5"/><path d="M400 464L500 406Q528 398 534 424Q532 444 518 452L444 500M514 458H592L516 510H420M0 492L54 482L64 490L74 528L64 540L10 556L0 552M54 482L70 478L86 522L74 528"/>
<path d="M570 48L664 96M564 58L660 102Q670 100 666 88L640 66L578 44Q566 48 564 58ZM566 66L546 134L612 166L652 102M560 110L622 142M552 122L614 152"/>
<path d="M724 104Q676 106 672 164Q670 190 684 206L706 216Q724 216 720 204L704 190Q706 180 722 172L740 176L760 164L772 170L776 194H792Q812 176 800 148Q788 108 750 104ZM692 132L718 168M756 108L754 160M724 104Q714 150 740 176M780 124L756 160"/>
<path d="M802 66H876L846 124L836 92ZM918 50Q926 46 940 52L1010 64L1044 96Q1048 104 1046 114L1034 164M918 50L900 170Q898 180 908 184L970 198M932 70L992 86M928 88L980 104M924 106L952 114M1010 64Q1010 100 1044 106M940 150L960 160L936 174Z"/><circle cx="993" cy="143" r="17"/>
<circle cx="1123" cy="69" r="43"/><path d="M1112 54L1140 68L1116 84ZM1196 50L1220 110Q1226 120 1236 116L1286 96Q1294 90 1290 82L1276 48M1242 92Q1244 80 1262 84Q1262 96 1242 96ZM1318 50V90H1392M1368 50V118H1392"/>
<path d="M728 360L698 326Q680 306 686 278Q698 246 728 244Q760 248 770 280Q774 306 756 326ZM672 360L650 334Q636 312 640 294Q648 276 672 276H686M786 360L808 334Q820 312 816 294Q808 276 786 276H770M672 360L698 326M786 360L756 328M728 262L738 280L756 284L742 296L744 316L728 306L712 316L714 296L700 284L718 280Z"/><path d="M686 286Q658 286 656 304Q660 320 678 320Q690 316 690 306M770 286Q798 288 800 304Q796 320 778 320Q766 316 766 306"/>
<circle cx="573" cy="394" r="28"/><circle cx="573" cy="394" r="15"/><path d="M548 384Q550 362 544 342Q548 326 578 326Q618 330 624 356Q620 378 602 390M558 344Q580 336 604 352Q606 366 596 376M558 344Q566 352 562 366"/>
<circle cx="971" cy="340" r="60"/><path d="M934 294Q950 306 976 304Q1010 306 1022 316M976 304Q940 330 952 376Q980 376 1010 352Q1010 320 984 300M912 352Q930 340 952 376L960 400M1010 352L1026 350M984 300L988 284"/><circle cx="984" cy="300" r="7"/><circle cx="1010" cy="354" r="7"/><circle cx="952" cy="374" r="7"/>
<path d="M538 540L582 494Q588 490 594 496L612 514L666 464Q674 458 680 464L690 472L730 438L714 438Q708 428 720 426L756 424L758 460Q750 472 742 464V450L696 492Q690 496 684 490L676 482L618 530Q610 536 604 530L588 514L548 550Q538 550 538 540Z"/>
<path d="M780 434L888 412Q930 412 940 450L942 476M780 434L796 448Q792 500 826 524L884 516M886 450Q876 438 862 442Q848 450 852 464Q862 472 874 474Q890 480 888 490Q878 504 856 494M866 436L874 504M1046 504L1034 516Q1036 560 1010 590Q990 596 930 588Q884 576 884 540Q882 500 910 480Q930 472 1046 504ZM948 506L962 532L982 508M962 532L958 562M940 532H978M940 544H976"/>
<path d="M1176 354Q1182 352 1190 358L1238 392Q1248 400 1244 410L1200 486L1192 490L1128 506L1114 444V430L1162 362ZM1160 466Q1110 468 1082 486Q1050 500 1060 508Q1080 520 1124 490M1188 398L1172 434"/><circle cx="1165" cy="405" r="10"/><circle cx="1196" cy="425" r="10"/><circle class="s" cx="1153" cy="466"/>
<circle cx="1225" cy="292" r="55"/><circle cx="1225" cy="292" r="44"/><circle cx="1225" cy="292" r="13"/><path d="M1392 320Q1348 340 1350 380Q1358 420 1392 430M1392 334Q1362 344 1364 378Q1370 406 1392 412M1168 192Q1166 178 1196 162L1222 168L1188 212ZM1188 212L1222 172L1326 216L1306 260L1190 232ZM1206 192L1314 240M1306 260L1326 216L1390 256M1280 316L1328 330L1386 280M1322 244V310M1334 250L1338 320M1318 330Q1330 308 1346 328Q1360 350 1330 364Q1310 358 1318 330M1222 168L1218 140L1240 146L1250 136L1276 148L1296 128V150L1322 180L1348 178Q1350 196 1326 206M1236 154L1244 148L1252 154V164L1244 170L1236 164ZM1254 154L1262 148L1270 154V164L1262 170L1254 164ZM1270 172L1278 166L1286 172V182L1278 188L1270 182ZM1288 164L1296 158L1304 164V174L1296 180L1288 174ZM1300 182L1308 176L1318 184V194L1310 200L1302 194Z"/>
<path d="M222 662L238 524Q240 514 250 514L460 536Q472 538 472 550L460 664M236 658L250 536Q252 530 260 530L450 550Q456 552 455 558L444 662M198 660H260M296 584L402 600L400 622L292 610ZM298 610V636Q300 650 312 650L376 658Q388 656 390 646L394 620M338 590L330 652M356 592L350 654M344 586Q316 580 314 568Q324 554 344 586Q360 562 380 566Q386 576 380 580Q364 588 344 586"/>
<path d="M70 660Q60 620 104 580Q116 600 76 660M76 662Q90 634 168 640Q150 660 130 668M108 596Q110 568 140 562Q170 556 178 566Q184 600 166 630L140 636Q112 632 108 596ZM118 576L142 566L166 576L174 598L158 620L134 628L116 606L124 590L146 584L166 598M124 590L132 608L158 620M146 584L142 566M132 608L116 606"/>
<path d="M515 570H586V595H563V618H539V595H515ZM539 570V595M563 570V595H539M730 528H758V556H730ZM756 515H773V530H756ZM680 664V622L696 630L712 624L728 632L742 624L760 634L780 622L796 630L812 622V664M738 626Q748 580 780 572Q804 574 796 612L790 626M762 592L770 602M752 606L762 616M608 666L624 640L640 650L624 666M626 638L634 654M866 664Q872 648 890 652L902 662"/>
<path d="M1062 606L1128 590Q1126 622 1152 622Q1172 616 1168 588L1220 632L1194 664L1178 652M1062 606L1078 652L1090 638L1088 664M1128 594Q1150 612 1166 592M1148 588V576Q1156 580 1168 574Q1172 560 1158 564M1282 664Q1284 640 1306 638L1392 654M1298 664Q1300 650 1312 652L1392 664M1392 526L1366 542L1378 596L1392 602"/>
<path d="M0 680Q40 676 60 716Q50 770 0 778M0 710Q40 720 60 716M0 740Q30 742 56 736M0 808L28 804Q36 814 30 838L0 840M100 814H260V849M106 826H252M140 814L150 849M184 814V849M222 814L216 849M486 816H516V846H486ZM576 816H592V834H576ZM592 816H620M376 814L388 826L396 814M680 846Q690 816 720 814L742 846M750 846L770 814L792 834L750 830M960 846Q962 822 986 816L1060 820Q1076 826 1074 846M1014 834L1028 824L1040 840M1028 824L1034 846M1114 814V836H1160V814M1138 814V836M1264 820L1320 836Q1360 844 1390 816"/>
</g>
</g>
<use href="#tile" x="-1026"/>
</pattern>
</defs>
<rect width="100%" height="100%" fill="url(#doodles)"/>
</svg>

<div class="app">
<header class="topbar">
  <span class="avatar"><svg width="20" height="20" viewBox="0 0 20 20" aria-hidden="true"><circle cx="10" cy="5.600" r="3.700"/><path d="M3 17v-1.800C3 12.300 6.500 11 10 11s7 1.300 7 4.200V17Z"/></svg></span>
  <h1 class="contact">Baruch De Ruiter</h1>
  <button class="icon-button" type="button" aria-label="Search"><svg width="24" height="24" viewBox="0 0 24 24" fill="none" stroke="currentColor" stroke-width="2"><circle cx="9.500" cy="9.500" r="5.500"/><path d="M13.500 13.500L20 20" stroke-width="2.300"/></svg></button>
  <button class="icon-button" type="button" aria-label="Menu"><svg width="24" height="24" viewBox="0 0 24 24" fill="currentColor"><circle cx="12" cy="6" r="2"/><circle cx="12" cy="12" r="2"/><circle cx="12" cy="18" r="2"/></svg></button>
</header>

<main class="chat">
  <span class="date-chip">6/19/2025</span>
  <article class="bubble out continued">
    <p>The threats comes from the way of contacting platforms and partners.</p>
    <p>I have no association with Hyder regarding this matter, nor am I aware of your problems. Kindly discuss it with him, not me.<br>If harm was to come it would have come but I generously asked you to revoke access as I want nothing to do with you or<br>your company and wish to avoid any problems. But you have taken my patience and goodwill to the limit. As I have clearly<br>mentioned this is a formal request, not a threat. The fact I'm even asking you to pay me without taking any actions is an act<br>of generosity.</p>
    <p>Regarding patience, I will be patient for the next 6 hours.<br>Regarding my performance for the final month, I asked Amilie about my performance every week and she raised no issues<br>of concern.</p>
    <span class="meta"><time>5:45 PM</time><svg width="16" height="12" viewBox="0 0 16 12" role="img" aria-label="Delivered"><path d="M1 7l2.500 2.500L9.500 2M6.500 8.500l1 1L14.500 2"/></svg></span>
  </article>
  <article class="bubble in tail">
    <p>As this has already been clarified multiple times, I will reiterate one last time for the record:</p>
    <p>The funds are being held as contingency. They will be released only after a reasonable period, assuming no damage is<br>identified. This is not negotiable and does not change based on arbitrary timelines or emotional appeals.</p>
    <p>Your continued framing of demands under tight deadlines while labeling them “formal requests” is noted. However,<br>repeatedly imposing ultimatums and timelines while denying association with related individuals involved in similar actions<br>does not inspire confidence.</p>
    <p>You’ve stated you wish to avoid problems. That option remains available—by simply ceasing further communication and<br>allowing the matter to settle as outlined.</p>
    <p>Your performance was reviewed based on outcomes, not conversations. We experienced consistent problems throughout<br>your time with Supersafe. Your recent claim of generosity is not aligned with the quality of service provided over the past<br>months.</p>
    <p>This concludes the matter. There will be no further discussion. Funds will be reviewed and potentially released only when<br>deemed appropriate, based on the condition that no harm results from prior negligence.</p>
    <p>Good luck with your future endeavors.</p>
    <span class="meta"><time>5:47 PM</time></span>
  </article>
  <article class="bubble out tail">
    <p>Demands under tight deadlines reflects your order of completing unread messages in 24hrs doesn't it?</p>
    <p>I have been making an effort of avoiding further problems but that does not seem to be the case for you.<br>I have been generous giving you 24 hrs for a few taps.</p>
    <p>I have reviewed the funds for you and it be should be released before the start of 20th June 2025 because your appropriate<br>time is "never"</p>
    <p>That will be all. Kindly refrain from making further threats and messages.</p>
    <span class="meta"><time>5:59 PM</time><svg width="16" height="12" viewBox="0 0 16 12" role="img" aria-label="Sent"><path d="M3 7l3 3L12.500 2"/></svg></span>
  </article>
  <span class="scroll-arrow up"></span>
  <span class="scroll-thumb"></span>
  <span class="scroll-arrow down"></span>
</main>

<form class="composer">
  <button class="icon-button" type="button" aria-label="Attach"><svg width="22" height="22" viewBox="0 0 22 22" fill="none" stroke="currentColor" stroke-width="1.800"><path d="M11 4v14M4 11h14"/></svg></button>
  <button class="icon-button" type="button" aria-label="Stickers"><svg width="22" height="22" viewBox="0 0 22 22" fill="none" stroke="currentColor" stroke-width="1.800" stroke-linejoin="round"><path d="M8 2.300h6Q19.700 2.300 19.700 8v5.500L13.500 19.700H8Q2.300 19.700 2.300 14V8Q2.300 2.300 8 2.300Z"/><path d="M12.300 15V19.400M13 19.500Q13.500 14.500 19.500 13.500" stroke-width="1.500"/><g fill="currentColor" stroke="none"><path d="M6 12h10Q15 14.800 12.300 15.200L10 15.400Q7 14.800 6 12Z"/><circle cx="7.700" cy="8.300" r="1.400"/><circle cx="14.300" cy="8.300" r="1.400"/></g></svg></button>
  <input class="message-input" type="text" placeholder="Type a message" aria-label="Type a message">
  <button class="icon-button" type="button" aria-label="Record voice message"><svg width="22" height="22" viewBox="0 0 22 22" fill="none" stroke="currentColor" stroke-width="1.700"><rect x="8.500" y="2.800" width="5" height="10.200" rx="2.500"/><path d="M5 10.500Q5.300 15.800 11 15.800T17 10.500M11 16v4"/></svg></button>
</form>
</div>
</body>
</html>
```
FILE: styles.css
```css
* {
  box-sizing: border-box;
}

body {
  margin: 0;
  background: #161717;
  color: #fafafa;
  font: 13px/18px "DejaVu Sans Condensed", "Noto Sans", sans-serif;
}

button {
  border: 0;
  padding: 0;
  background: none;
  color: inherit;
  cursor: pointer;
}

svg {
  display: block;
}

.wallpaper {
  position: fixed;
  inset: 0;
  z-index: -1;
}

.ink {
  fill: none;
  stroke: #222424;
  stroke-width: 4;
  stroke-linecap: round;
  stroke-linejoin: round;
  scale: 0.3333;
}

.s { r: 8px; }
.m { r: 13px; }
.l { r: 18px; }

.app {
  display: flex;
  flex-direction: column;
  height: 100vh;
}

.topbar {
  display: flex;
  align-items: center;
  flex: none;
  height: 62px;
  padding: 0 20px 0 15px;
  background: #161717;
  box-shadow: inset 0 1px #1c1d26;
}

.avatar {
  display: grid;
  place-items: center;
  width: 40px;
  height: 40px;
  margin-right: 13px;
  border: 1px solid #2e3030;
  border-radius: 50%;
  background: #242626;
  fill: #a5a5a5;
}

.contact {
  flex: 1;
  margin: 0;
  font: 600 14px/18px "Noto Sans", sans-serif;
}

.topbar .icon-button {
  margin-left: 24px;
}

.chat {
  position: relative;
  display: flex;
  flex: 1;
  flex-direction: column;
  justify-content: flex-end;
  gap: 12px;
  min-height: 0;
  padding: 0 61px 19px 59px;
  overflow: hidden;
}

.bubble {
  position: relative;
  flex: none;
  width: 65%;
  padding: 6px 6px 7px 9px;
  border-radius: 8px;
}

.bubble p {
  margin: 0 0 18px;
}

.bubble p:last-of-type {
  margin-bottom: 0;
}

.in {
  align-self: flex-start;
  background: #242626;
}

.out {
  align-self: flex-end;
  background: #144d37;
}

.continued {
  border-top-left-radius: 0;
  border-top-right-radius: 0;
}

.in.tail {
  border-top-left-radius: 0;
}

.out.tail {
  border-top-right-radius: 0;
}

.tail::before {
  content: "";
  position: absolute;
  top: 0;
  width: 6px;
  height: 9px;
  background: inherit;
}

.in.tail::before {
  right: 100%;
  clip-path: polygon(0 0, 100% 0, 100% 100%);
}

.out.tail::before {
  left: 100%;
  clip-path: polygon(0 0, 100% 0, 0 100%);
}

.meta {
  position: absolute;
  right: 6px;
  bottom: 2px;
  display: flex;
  align-items: center;
  gap: 2px;
  color: #a3a4a4;
  font: 10px/16px "Noto Sans", sans-serif;
}

.out .meta {
  color: #a0b7ae;
}

.meta svg {
  fill: none;
  stroke: currentColor;
  stroke-width: 1.3;
}

.date-chip {
  position: absolute;
  top: 7px;
  left: 50%;
  z-index: 1;
  padding: 3px 12px 4px;
  transform: translateX(-50%);
  border-radius: 7px;
  background: #1d1f1f;
  color: #a3a4a4;
  font: 600 11px/17px "Noto Sans", sans-serif;
}

.scroll-thumb,
.scroll-arrow {
  position: absolute;
  right: 0;
  width: 5px;
}

.scroll-thumb {
  bottom: 12px;
  height: 133px;
  border-radius: 3px 0 0 3px;
  background: #464747;
}

.scroll-arrow {
  height: 4px;
  background: #5a5b5b;
}

.scroll-arrow.up {
  top: 3px;
  clip-path: polygon(0 100%, 100% 0, 100% 100%);
}

.scroll-arrow.down {
  bottom: 3px;
  clip-path: polygon(0 0, 100% 0, 100% 100%);
}

.composer {
  display: flex;
  align-items: center;
  flex: none;
  gap: 16px;
  height: 50px;
  margin: 0 8px 11px 12px;
  padding: 0 15px 0 13px;
  border-radius: 25px;
  background: #242626;
}

.message-input {
  flex: 1;
  min-width: 0;
  margin-left: -2px;
  padding: 0;
  border: 0;
  outline: 0;
  background: none;
  color: inherit;
  font: 14px/20px "DejaVu Sans Condensed", "Noto Sans", sans-serif;
}

.message-input::placeholder {
  color: #9b9c9c;
  opacity: 1;
}
```
